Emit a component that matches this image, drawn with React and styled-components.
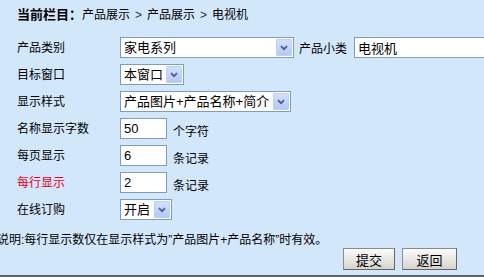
import React from 'react';
import styled, { createGlobalStyle } from 'styled-components';

const GlobalStyle = createGlobalStyle`
  html, body {
    margin: 0;
    padding: 0;
    background: #d3e7fb;
  }
  body {
    font-family: "Liberation Sans", "Noto Sans CJK SC", sans-serif;
  }
`;

const Page = styled.div`
  width: 484px;
  height: 277px;
  box-sizing: border-box;
  background: #d3e7fb;
  border-bottom: 2px solid #5f5f5f;
  overflow: hidden;
  display: flex;
  flex-direction: column;
`;

const Crumb = styled.div`
  height: 34px;
  box-sizing: border-box;
  padding: 8px 0 0 17px;
  font-size: 12px;
  line-height: 14px;
  color: #000;
  white-space: nowrap;

  b {
    font-size: 13px;
    font-weight: bold;
  }
`;

const Sep = styled.span`
  display: inline-block;
  padding: 0 5px;
  color: #333;
`;

const Row = styled.div`
  display: flex;
  align-items: center;
  height: 27px;
  padding-left: 17px;
  white-space: nowrap;
`;

const Label = styled.div`
  width: 103px;
  flex: none;
  font-size: 12px;
  line-height: 14px;
  color: ${p => (p.$warn ? '#e2001a' : '#000')};
`;

const SideLabel = styled.span`
  margin: 0 7px 0 5px;
  font-size: 12px;
  color: #000;
`;

const Unit = styled.span`
  margin-left: 6px;
  margin-top: 3px;
  font-size: 12px;
  color: #000;
`;

const SelectBox = styled.div`
  width: ${p => p.$w}px;
  height: 21px;
  flex: none;
  box-sizing: border-box;
  border: 1px solid #7f9db9;
  background: #fff;
  display: flex;
  align-items: center;
`;

const SelectText = styled.span`
  flex: 1;
  padding-left: 3px;
  font-size: 13px;
  line-height: 19px;
  color: #000;
  overflow: hidden;
`;

const Arrow = styled.span`
  width: 16px;
  height: 17px;
  margin-right: 1px;
  box-sizing: border-box;
  border: 1px solid #bccff6;
  border-radius: 1px;
  background: linear-gradient(#d3e0fc, #b5c9f6);
  display: flex;
  align-items: center;
  justify-content: center;
`;

const TextInput = styled.input`
  width: ${p => p.$w}px;
  height: 21px;
  flex: none;
  box-sizing: border-box;
  margin: 0;
  padding: 0 0 0 3px;
  border: 1px solid #7f9db9;
  background: #fff;
  font-family: "Liberation Sans", "Noto Sans CJK SC", sans-serif;
  font-size: 13px;
  color: #000;
  outline: none;
`;

const Note = styled.div`
  margin: 10px 0 0 -3px;
  font-size: 12px;
  line-height: 14px;
  color: #000;
  white-space: nowrap;
`;

const Actions = styled.div`
  display: flex;
  justify-content: flex-end;
  gap: 7px;
  margin-top: 1px;
  padding-right: 27px;
`;

const Button = styled.button`
  width: ${p => p.$w}px;
  height: 22px;
  margin: 0;
  padding: 0;
  box-sizing: border-box;
  border: 1px solid #8a8a8a;
  border-right-color: #666;
  border-bottom-color: #666;
  background: linear-gradient(#fbfbfb, #e6e4df 60%, #d6d3cc);
  font-family: "Liberation Sans", "Noto Sans CJK SC", sans-serif;
  font-size: 13px;
  color: #000;
`;

const Select = ({ w, children }) => (
  <SelectBox $w={w}>
    <SelectText>{children}</SelectText>
    <Arrow>
      <svg width="8" height="6" viewBox="0 0 8 6">
        <path d="M1 1.2 L4 4.2 L7 1.2" fill="none" stroke="#4b5f86" strokeWidth="1.8" />
      </svg>
    </Arrow>
  </SelectBox>
);

export default function App() {
  return (
    <Page>
      <GlobalStyle />
      <Crumb>
        <b>当前栏目：</b>产品展示<Sep>&gt;</Sep>产品展示<Sep>&gt;</Sep>电视机
      </Crumb>

      <Row>
        <Label>产品类别</Label>
        <Select w={174}>家电系列</Select>
        <SideLabel>产品小类</SideLabel>
        <TextInput $w={132} defaultValue="电视机" readOnly />
      </Row>
      <Row>
        <Label>目标窗口</Label>
        <Select w={64}>本窗口</Select>
      </Row>
      <Row>
        <Label>显示样式</Label>
        <Select w={171}>产品图片+产品名称+简介</Select>
      </Row>
      <Row>
        <Label>名称显示字数</Label>
        <TextInput $w={47} defaultValue="50" readOnly />
        <Unit>个字符</Unit>
      </Row>
      <Row>
        <Label>每页显示</Label>
        <TextInput $w={47} defaultValue="6" readOnly />
        <Unit>条记录</Unit>
      </Row>
      <Row>
        <Label $warn>每行显示</Label>
        <TextInput $w={47} defaultValue="2" readOnly />
        <Unit>条记录</Unit>
      </Row>
      <Row>
        <Label>在线订购</Label>
        <Select w={52}>开启</Select>
      </Row>

      <Note>说明:每行显示数仅在显示样式为”产品图片+产品名称”时有效。</Note>

      <Actions>
        <Button $w={52}>提交</Button>
        <Button $w={55}>返回</Button>
      </Actions>
    </Page>
  );
}
